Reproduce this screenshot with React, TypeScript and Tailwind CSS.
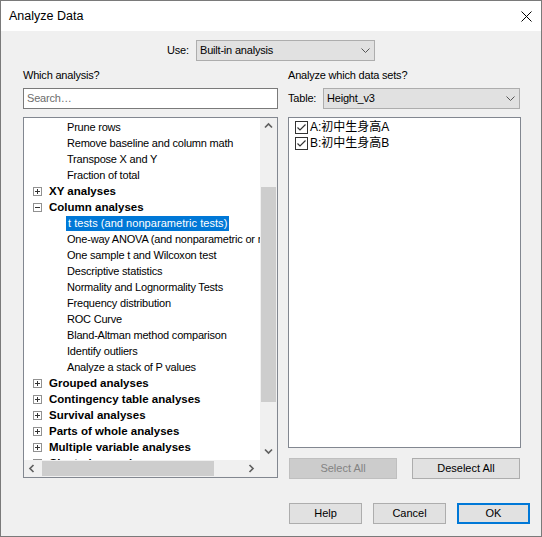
import React from "react";

function DropChevron() {
  return (
    <svg width="9" height="5" viewBox="0 0 9 5" className="shrink-0">
      <polyline points="0.5,0.5 4.5,4.5 8.5,0.5" fill="none" stroke="#555" strokeWidth="1" />
    </svg>
  );
}

function ScrollArrow({ dir }: { dir: "up" | "down" | "left" | "right" }) {
  const pts: Record<string, string> = {
    up: "1,5.5 4.5,2 8,5.5",
    down: "1,2.5 4.5,6 8,2.5",
    left: "5.5,1 2,4.5 5.5,8",
    right: "2.5,1 6,4.5 2.5,8",
  };
  return (
    <svg width="9" height="9" viewBox="0 0 9 9">
      <polyline points={pts[dir]} fill="none" stroke="#606060" strokeWidth="1.7" />
    </svg>
  );
}

function ExpandBox({ open }: { open: boolean }) {
  return (
    <svg width="9" height="9" viewBox="0 0 9 9" className="shrink-0">
      <rect x="0.5" y="0.5" width="8" height="8" fill="#fff" stroke="#919191" />
      <path d="M2 4.5H7" stroke="#333" strokeWidth="1" />
      {!open && <path d="M4.5 2V7" stroke="#333" strokeWidth="1" />}
    </svg>
  );
}

function CheckBox() {
  return (
    <svg width="13" height="13" viewBox="0 0 13 13" className="shrink-0">
      <rect x="0.5" y="0.5" width="12" height="12" fill="#fff" stroke="#333" />
      <polyline points="2.5,6.5 5,9 10.5,3.5" fill="none" stroke="#333" strokeWidth="1.2" />
    </svg>
  );
}

type Row = { kind: "child" | "group"; text: string; open?: boolean; selected?: boolean };

const rows: Row[] = [
  { kind: "child", text: "Prune rows" },
  { kind: "child", text: "Remove baseline and column math" },
  { kind: "child", text: "Transpose X and Y" },
  { kind: "child", text: "Fraction of total" },
  { kind: "group", text: "XY analyses", open: false },
  { kind: "group", text: "Column analyses", open: true },
  { kind: "child", text: "t tests (and nonparametric tests)", selected: true },
  { kind: "child", text: "One-way ANOVA (and nonparametric or mixed)" },
  { kind: "child", text: "One sample t and Wilcoxon test" },
  { kind: "child", text: "Descriptive statistics" },
  { kind: "child", text: "Normality and Lognormality Tests" },
  { kind: "child", text: "Frequency distribution" },
  { kind: "child", text: "ROC Curve" },
  { kind: "child", text: "Bland-Altman method comparison" },
  { kind: "child", text: "Identify outliers" },
  { kind: "child", text: "Analyze a stack of P values" },
  { kind: "group", text: "Grouped analyses", open: false },
  { kind: "group", text: "Contingency table analyses", open: false },
  { kind: "group", text: "Survival analyses", open: false },
  { kind: "group", text: "Parts of whole analyses", open: false },
  { kind: "group", text: "Multiple variable analyses", open: false },
  { kind: "group", text: "Clustering analyses", open: false },
];

export default function App() {
  return (
    <div className="w-[542px] h-[537px] bg-[#f0f0f0] border border-[#7a7a7a] flex flex-col font-['Liberation_Sans','Noto_Sans_CJK_SC',Arial,sans-serif] text-[11px] text-black overflow-hidden">
      {/* Title bar */}
      <div className="h-[30px] shrink-0 bg-white flex items-center justify-between pl-[8px] pr-[9px]">
        <span className="text-[12.5px]">Analyze Data</span>
        <svg width="11" height="11" viewBox="0 0 11 11">
          <path d="M0.5 0.5L10.5 10.5M10.5 0.5L0.5 10.5" stroke="#000" strokeWidth="1" />
        </svg>
      </div>

      {/* Use row */}
      <div className="mt-[9px] flex items-center pl-[166px]">
        <span className="w-[29px] tracking-[-0.2px]">Use:</span>
        <div className="w-[179px] h-[21px] bg-[#e1e1e1] border border-[#adadad] flex items-center justify-between pl-[3px] pr-[4px]">
          <span className="tracking-[-0.2px]">Built-in analysis</span>
          <DropChevron />
        </div>
      </div>

      {/* Columns */}
      <div className="mt-[7px] flex pl-[22px] gap-[10px]">
        {/* Left column */}
        <div className="w-[255px] flex flex-col">
          <div className="h-[14px] leading-[14px] tracking-[-0.2px]">Which analysis?</div>
          <div className="mt-[6px] h-[21px] bg-white border border-[#7a7a7a] flex items-center pl-[3px] text-[#6d6d6d] tracking-[-0.2px]">
            Search…
          </div>
          <div className="mt-[8px] h-[361px] border border-[#828790] bg-white flex flex-col">
            <div className="flex flex-1 min-h-0">
              <div className="flex-1 min-w-0 overflow-hidden pt-[1px]">
                {rows.map((r, i) =>
                  r.kind === "group" ? (
                    <div key={i} className="h-[16px] pt-[1px] flex items-center pl-[9px] whitespace-nowrap">
                      <ExpandBox open={!!r.open} />
                      <span className="ml-[7px] font-bold text-[11.5px]">{r.text}</span>
                    </div>
                  ) : (
                    <div key={i} className="h-[16px] flex items-center whitespace-nowrap">
                      {r.selected ? (
                        <span className="ml-[42px] pl-[2px] pr-[2px] h-[15px] leading-[15px] mt-[1px] bg-[#0078d7] text-white tracking-[0.05px]">
                          {r.text}
                        </span>
                      ) : (
                        <span className="ml-[43px] tracking-[-0.2px]">{r.text}</span>
                      )}
                    </div>
                  )
                )}
              </div>
              <div className="w-[17px] shrink-0 bg-[#f0f0f0] flex flex-col">
                <div className="h-[17px] flex items-center justify-center">
                  <ScrollArrow dir="up" />
                </div>
                <div className="mt-[52px] mx-[1px] h-[215px] bg-[#cdcdcd]" />
                <div className="flex-1" />
                <div className="h-[17px] flex items-center justify-center">
                  <ScrollArrow dir="down" />
                </div>
              </div>
            </div>
            <div className="h-[17px] shrink-0 flex bg-[#f0f0f0]">
              <div className="w-[17px] flex items-center justify-center">
                <ScrollArrow dir="left" />
              </div>
              <div className="ml-[1px] my-[1px] w-[172px] bg-[#cdcdcd]" />
              <div className="flex-1" />
              <div className="w-[17px] flex items-center justify-center">
                <ScrollArrow dir="right" />
              </div>
              <div className="w-[17px]" />
            </div>
          </div>
        </div>

        {/* Right column */}
        <div className="w-[233px] flex flex-col">
          <div className="h-[14px] leading-[14px] tracking-[-0.2px]">Analyze which data sets?</div>
          <div className="mt-[6px] h-[21px] flex items-center">
            <span className="w-[35px] tracking-[-0.2px]">Table:</span>
            <div className="w-[197px] h-[21px] bg-[#e1e1e1] border border-[#adadad] flex items-center justify-between pl-[3px] pr-[4px]">
              <span className="tracking-[-0.2px]">Height_v3</span>
              <DropChevron />
            </div>
          </div>
          <div className="mt-[8px] h-[331px] border border-[#828790] bg-white pt-[1px] pl-[6px]">
            {["A:初中生身高A", "B:初中生身高B"].map((t) => (
              <div key={t} className="h-[16px] flex items-center">
                <CheckBox />
                <span className="ml-[2px] text-[12px] leading-[16px]">{t}</span>
              </div>
            ))}
          </div>
          <div className="mt-[10px] h-[21px] flex justify-between px-[1px]">
            <div className="w-[108px] h-[21px] bg-[#cccccc] border border-[#bfbfbf] text-[#838383] flex items-center justify-center">
              Select All
            </div>
            <div className="w-[108px] h-[21px] bg-[#e1e1e1] border border-[#adadad] flex items-center justify-center">
              Deselect All
            </div>
          </div>
        </div>
      </div>

      {/* Bottom buttons */}
      <div className="mt-[24px] flex pl-[288px] gap-[11px]">
        <div className="w-[73px] h-[21px] bg-[#e1e1e1] border border-[#adadad] flex items-center justify-center">Help</div>
        <div className="w-[73px] h-[21px] bg-[#e1e1e1] border border-[#adadad] flex items-center justify-center">Cancel</div>
        <div className="w-[73px] h-[21px] bg-[#e1e1e1] border-2 border-[#0078d7] flex items-center justify-center">OK</div>
      </div>
    </div>
  );
}
